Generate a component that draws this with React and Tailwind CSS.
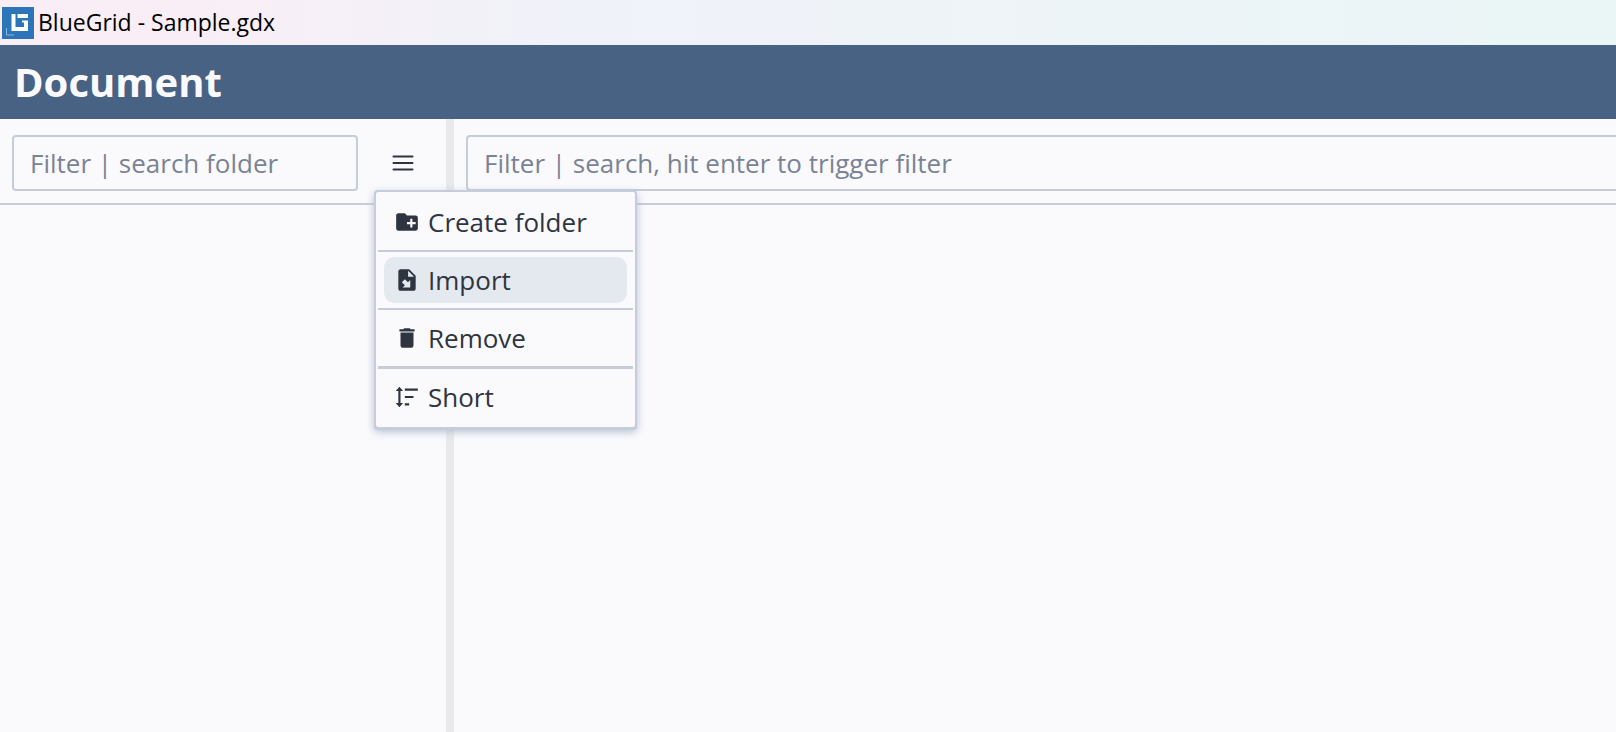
const Icon = ({ children }) => (
  <svg viewBox="0 0 24 24" className="h-[26px] w-[26px] shrink-0" fill="currentColor" aria-hidden="true">
    {children}
  </svg>
);

const FolderPlusIcon = () => (
  <Icon>
    <path d="M10 4L12 6H20A2 2 0 0 1 22 8V18A2 2 0 0 1 20 20H4C2.89 20 2 19.1 2 18V6C2 4.89 2.89 4 4 4H10M15 9V12H12V14H15V17H17V14H20V12H17V9H15Z" />
  </Icon>
);

const FileImportIcon = () => (
  <Icon>
    <path d="M14 2H6C4.89 2 4 2.9 4 4V20C4 21.11 4.89 22 6 22H18C19.11 22 20 21.11 20 20V8L14 2M13 3.5L18.5 9H13V3.5M10.05 11.22L12.88 14.05L15 11.93V19H7.93L10.05 16.88L7.22 14.05L10.05 11.22Z" />
  </Icon>
);

const TrashIcon = () => (
  <Icon>
    <path d="M19 4H15.5L14.5 3H9.5L8.5 4H5V6H19M6 19A2 2 0 0 0 8 21H16A2 2 0 0 0 18 19V7H6V19Z" />
  </Icon>
);

const SortIcon = () => (
  <Icon>
    <path d="M5 2.6L8.4 6.4H6V17.6H8.4L5 21.4L1.6 17.6H4V6.4H1.6L5 2.6ZM10 4.2H22V6.2H10ZM10 11H18V13H10ZM10 17.8H14V19.8H10Z" />
  </Icon>
);

const Logo = () => (
  <svg viewBox="0 0 32 32" className="h-8 w-8 shrink-0" aria-hidden="true">
    <rect width="32" height="32" fill="#2c75b8" />
    <path d="M9.5 7H13.5V20H22V15.5H20V13.5H26V24H9.5Z" fill="#fff" />
    <path d="M15.5 7H26V11H15.5Z" fill="#fff" />
    <path d="M4.5 21V28H12" fill="none" stroke="#8fb6dc" />
  </svg>
);

const items = [
  { label: "Create folder", icon: FolderPlusIcon },
  { label: "Import", icon: FileImportIcon, active: true },
  { label: "Remove", icon: TrashIcon },
  { label: "Short", icon: SortIcon, heavyRule: true },
];

function FolderMenu() {
  return (
    <div
      role="menu"
      className="absolute top-full left-0 z-10 -mt-px w-[263px] rounded border-2 border-[#c6ccda] bg-[#fafafd] p-0.5 shadow-[0_1px_0_#c6ccda,0_3px_8px_#b4bfd2]"
    >
      {items.map(({ label, icon: ItemIcon, active, heavyRule }, i) => (
        <div key={label}>
          {i > 0 && (
            <div role="separator" className={heavyRule ? "h-[3px] bg-[#c6ccda]" : "h-0.5 bg-[#c6ccda]"} />
          )}
          <div className="px-1.5 py-[5px]">
            <button
              type="button"
              role="menuitem"
              className={
                active
                  ? "flex h-[46px] w-full items-center gap-2 rounded-[10px] bg-[#e4e9f0] px-2.5 text-[26px]"
                  : "flex h-[46px] w-full items-center gap-2 rounded-[10px] px-2.5 text-[26px]"
              }
            >
              <ItemIcon />
              {label}
            </button>
          </div>
        </div>
      ))}
    </div>
  );
}

export default function App() {
  return (
    <div className="flex h-screen flex-col overflow-hidden bg-[#fafafd] font-['Open_Sans','Noto_Sans',sans-serif] text-[#2e3440]">
      <div className="flex h-[45px] shrink-0 items-center gap-1 bg-linear-to-r from-[#f9eef6] from-12% via-[#f0f2f9] via-35% to-[#eaf5f6] to-95% px-0.5 text-[23px] text-black">
        <Logo />
        <span>BlueGrid - Sample.gdx</span>
      </div>
      <header className="flex h-[74px] shrink-0 items-center bg-[#486284] px-[14px]">
        <h1 className="text-[40px] leading-none font-bold text-[#fafafd]">Document</h1>
      </header>
      <main className="flex min-h-0 flex-1">
        <aside className="w-[446px] shrink-0">
          <div className="flex h-[86px] items-end gap-4 border-b-2 border-[#c6ccda] pr-[14px] pb-3 pl-3">
            <input
              type="text"
              aria-label="Filter folders"
              placeholder="Filter | search folder"
              className="h-14 min-w-0 flex-1 rounded border-2 border-[#c6ccda] bg-transparent px-4 text-[26px] placeholder:text-[#7a8394]"
            />
            <div className="relative">
              <button
                type="button"
                aria-label="Folder menu"
                aria-haspopup="menu"
                aria-expanded="true"
                className="flex h-14 w-[58px] items-center justify-center"
              >
                <svg viewBox="0 0 22 16" className="h-4 w-[22px]" fill="none" stroke="currentColor" strokeWidth="2" strokeLinecap="round" aria-hidden="true">
                  <path d="M1.5 1.5H20.5M1.5 8H20.5M1.5 14.5H20.5" />
                </svg>
              </button>
              <FolderMenu />
            </div>
          </div>
        </aside>
        <div className="w-2 shrink-0 bg-[#e9e9eb]" />
        <section className="min-w-0 flex-1">
          <div className="flex h-[86px] items-end border-b-2 border-[#c6ccda] pb-3 pl-3">
            <input
              type="text"
              aria-label="Filter documents"
              placeholder="Filter | search, hit enter to trigger filter"
              className="h-14 min-w-0 flex-1 rounded-l border-2 border-r-0 border-[#c6ccda] bg-transparent px-4 text-[26px] placeholder:text-[#7a8394]"
            />
          </div>
        </section>
      </main>
    </div>
  );
}
